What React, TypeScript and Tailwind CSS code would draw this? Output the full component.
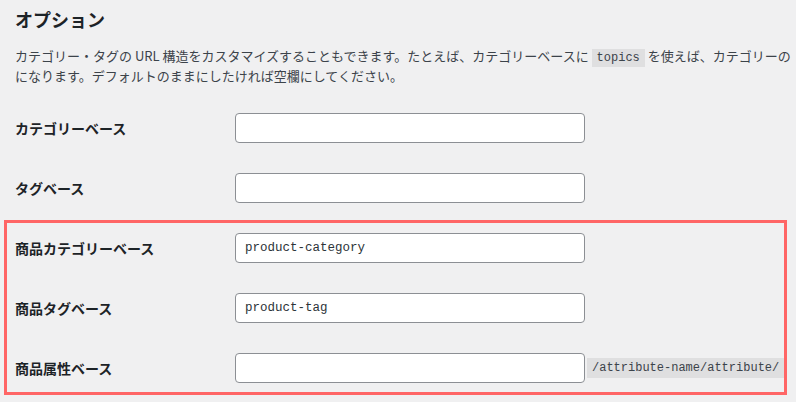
import React from "react";

const jp = { fontFamily: '"Noto Sans CJK JP", "Noto Sans", sans-serif' };
const mono = { fontFamily: '"Liberation Mono", "DejaVu Sans Mono", monospace' };

function Row({ label, value, suffix }: { label: string; value?: string; suffix?: string }) {
  return (
    <div className="flex h-[60px] items-center">
      <div className="w-[220px] text-[14px] font-bold text-[#1d2327]">{label}</div>
      <div className="flex items-center">
        <input
          readOnly
          value={value ?? ""}
          className="h-[30px] w-[350px] rounded-[4px] border border-[#8c8f94] bg-white pl-[9px] text-[12.5px] text-[#2c3338] outline-none"
          style={mono}
        />
        {suffix && (
          <code
            className="ml-[2px] bg-[#dfdfe0] px-[5px] py-[1px] text-[12px] leading-[18px] text-[#3c434a]"
            style={mono}
          >
            {suffix}
          </code>
        )}
      </div>
    </div>
  );
}

export default function App() {
  return (
    <div className="relative h-[402px] w-[796px] overflow-hidden bg-[#f0f0f1]" style={jp}>
      <div className="pl-[15px] pt-[7px]">
        <h2 className="text-[18px] font-bold leading-[24px] text-[#1d2327]">オプション</h2>
        <p className="mt-[15px] whitespace-nowrap text-[13px] leading-[20px] text-[#3c434a]">
          カテゴリー・タグの URL 構造をカスタマイズすることもできます。たとえば、カテゴリーベースに{" "}
          <code className="bg-[#dfdfe0] px-[5px] py-[2px] text-[12px] leading-[16px] text-[#3c434a]" style={mono}>
            topics
          </code>{" "}
          を使えば、カテゴリーの
          <br />
          になります。デフォルトのままにしたければ空欄にしてください。
        </p>
        <div className="mt-[12px]">
          <Row label="カテゴリーベース" />
          <Row label="タグベース" />
          <Row label="商品カテゴリーベース" value="product-category" />
          <Row label="商品タグベース" value="product-tag" />
          <Row label="商品属性ベース" suffix="/attribute-name/attribute/" />
        </div>
      </div>
      <div className="pointer-events-none absolute left-[4px] top-[220px] h-[175px] w-[783px] border-[3px] border-[#ff6666]" />
    </div>
  );
}
